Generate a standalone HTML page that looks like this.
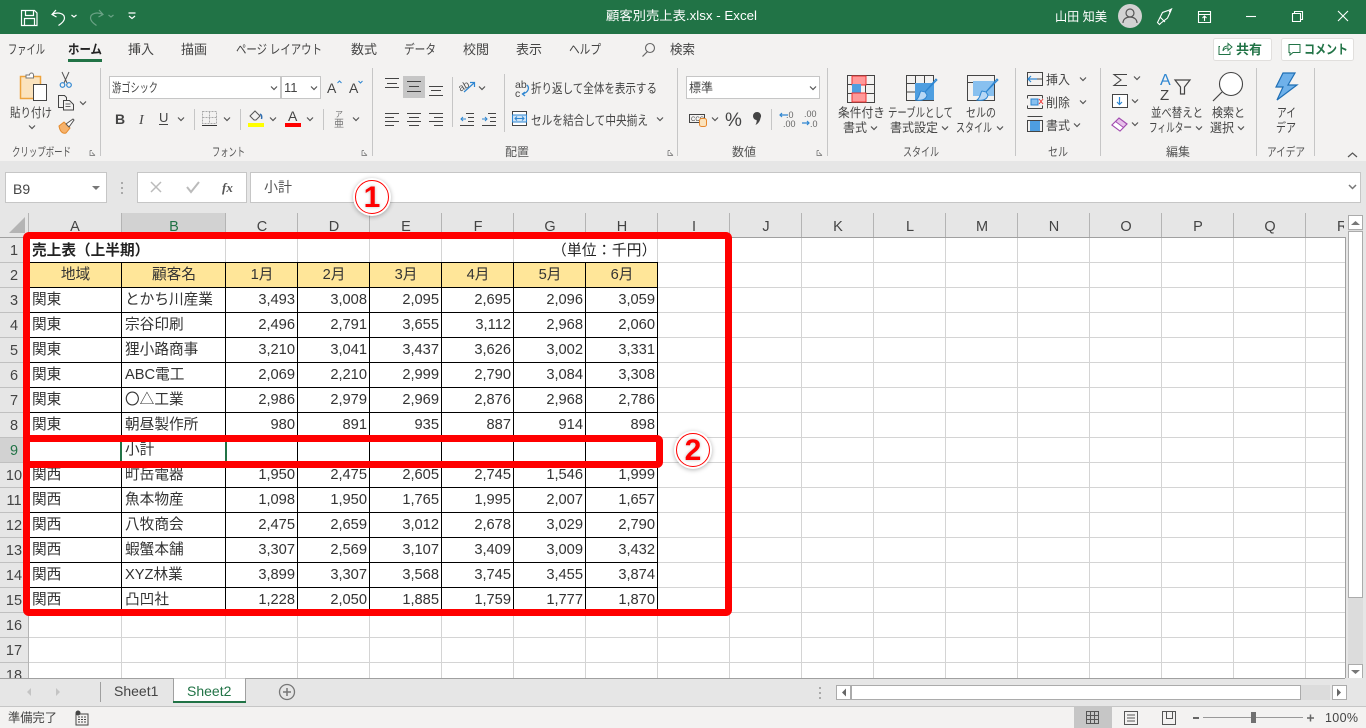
<!DOCTYPE html>
<html lang="ja"><head><meta charset="utf-8"><title>顧客別売上表.xlsx - Excel</title>
<style>
html,body{margin:0;padding:0;width:1366px;height:728px;overflow:hidden;background:#e6e6e6}
body{position:relative;font-family:"Liberation Sans","Noto Sans CJK JP",sans-serif}
svg{position:absolute;left:0;top:0}
svg text{font-family:"Liberation Sans","Noto Sans CJK JP",sans-serif;fill:#444;font-size:12px}
svg .l{font-size:12px;fill:#555}
svg .b{font-size:12.5px;fill:#444}
svg .m{font-size:13px;fill:#444}
svg .w{fill:#fff;font-size:12.5px}
svg .h{font-size:14.5px;fill:#444;text-anchor:middle}
table{position:absolute;left:28px;top:262px;border-collapse:separate;border-spacing:0;table-layout:fixed;width:630px;border-top:1px solid #000;border-left:1px solid #000;font-size:14.67px;color:#333;z-index:2}
td{box-sizing:border-box;height:25px;padding:0 2px 0 3px;border-right:1px solid #000;border-bottom:1px solid #000;background:#fff;text-align:right;white-space:nowrap;overflow:hidden;line-height:24px}
td:nth-child(1),td:nth-child(2){text-align:left}
tr.hd td{background:#ffe699;text-align:center}
.abs{position:absolute;z-index:2;font-size:14.67px;color:#222;white-space:nowrap;line-height:22px}
.box{position:absolute;box-sizing:border-box;border:7px solid #f00;border-radius:6px;z-index:4}
.c{position:absolute;width:38px;height:38px;border-radius:50%;background:#fff;box-shadow:0 1px 5px rgba(0,0,0,.3);z-index:5}
.c span{position:absolute;left:2px;top:2px;width:32px;height:32px;border:1px solid #f00;border-radius:50%;color:#f00;font-weight:bold;font-size:30px;line-height:33px;text-align:center;text-shadow:0 0 3px rgba(0,0,0,.25)}
.sel{position:absolute;background:#217346;z-index:3}
</style></head><body>

<svg width="1366" height="728" viewBox="0 0 1366 728" style="z-index:1">
<defs>
<path id="cv" d="M-3-1.5 0 1.5 3-1.5" fill="none" stroke="#555" stroke-width="1.2"/>
<path id="ln" d="M-2.5-2.5v5h5M-.5-.5l3 3M-2.5-2.5h2" fill="none" stroke="#888" stroke-width=".9"/>
</defs>
<!-- backgrounds -->
<rect width="1366" height="34" fill="#217346"/>
<rect y="34" width="1366" height="127" fill="#f3f2f1"/>
<rect y="161" width="1366" height="52" fill="#e6e6e6"/>

<!-- title bar -->
<g fill="none" stroke="#fff" stroke-width="1.2">
<path d="M21.5 10.5h13l2.500 2.500v12.500h-15.500z"/><path d="M25.500 10.500v5h8v-5M24.500 25.500v-7h10v7"/>
<path d="M56 10l-4 4.500 4.500 2.500M52 14.500c6-3 12.500-1 12.500 3.500 0 3-3 5.500-6 7.500"/>
<path d="M71.500 15l2.500 2 2.500-2"/>
<path d="M128.500 13h7M129 16l3 2.500 3-2.500"/>
</g>
<g fill="none" stroke="#6aa285" stroke-width="1.2">
<path d="M99 10l4 4.500-4.500 2.500M103 14.500c-6-3-12.500-1-12.500 3.500 0 3 3 5.500 6 7.500"/>
<path d="M108.500 15l2.500 2 2.500-2"/>
</g>
<text class="w" x="606" y="20" textLength="151" lengthAdjust="spacingAndGlyphs">顧客別売上表.xlsx  -  Excel</text>
<text class="w" x="1055" y="21" textLength="52" lengthAdjust="spacingAndGlyphs">山田 知美</text>
<circle cx="1130" cy="16" r="12" fill="#d2d2d2"/>
<circle cx="1130" cy="13" r="4" fill="none" stroke="#555" stroke-width="1.200"/>
<path d="M1123 23c0-8 14-8 14 0" fill="none" stroke="#555" stroke-width="1.200"/>
<g fill="none" stroke="#fff" stroke-width="1.100">
<path d="M1161 23l-1.500 1.500-2-2 5-10 7-2.500 2-1-1 2.500-3 6.500zM1160 17l5 5M1169 12l2-2"/>
<path d="M1198.500 11.500h12v11h-12zM1198.500 14.500h12M1204.500 21v-5M1202.500 18l2-2 2 2"/>
<path d="M1246 16.500h10"/>
<path d="M1292.500 13.500h8v8h-8zM1294.500 13.500v-2h8v8h-2"/>
<path d="M1338 11l10 10M1348 11l-10 10"/>
</g>

<!-- tabs -->
<text class="m" x="8" y="54" textLength="37" lengthAdjust="spacingAndGlyphs">ファイル</text>
<text class="m" x="68" y="54" textLength="34" lengthAdjust="spacingAndGlyphs" style="font-weight:bold;fill:#222">ホーム</text>
<rect x="68" y="59" width="34" height="3" fill="#217346"/>
<text class="m" x="128" y="54" textLength="26" lengthAdjust="spacingAndGlyphs">挿入</text>
<text class="m" x="181" y="54" textLength="26" lengthAdjust="spacingAndGlyphs">描画</text>
<text class="m" x="236" y="54" textLength="86" lengthAdjust="spacingAndGlyphs">ページ レイアウト</text>
<text class="m" x="351" y="54" textLength="26" lengthAdjust="spacingAndGlyphs">数式</text>
<text class="m" x="404" y="54" textLength="32" lengthAdjust="spacingAndGlyphs">データ</text>
<text class="m" x="463" y="54" textLength="26" lengthAdjust="spacingAndGlyphs">校閲</text>
<text class="m" x="516" y="54" textLength="26" lengthAdjust="spacingAndGlyphs">表示</text>
<text class="m" x="569" y="54" textLength="32" lengthAdjust="spacingAndGlyphs">ヘルプ</text>
<circle cx="650" cy="48" r="4.500" fill="none" stroke="#666" stroke-width="1.100"/><path d="M647 52l-4.500 4.500" stroke="#666" stroke-width="1.200"/>
<text class="m" x="670" y="54" textLength="25" lengthAdjust="spacingAndGlyphs">検索</text>

<rect x="1213.500" y="38.500" width="58" height="22" rx="2" fill="#fff" stroke="#e1dfdd"/>
<path d="M1220 46.500h-1v8h11v-3M1223 51c0-4 2-5 5-5v-2.500l4 3.500-4 3.500v-2.500c-2 0-4 .500-5 3" fill="none" stroke="#217346"/>
<text x="1236" y="54" textLength="26" style="font-weight:bold;fill:#217346;font-size:13px">共有</text>
<rect x="1281.500" y="38.500" width="72" height="22" rx="2" fill="#fff" stroke="#e1dfdd"/>
<path d="M1289 44.500h11v8h-7l-3 2.500v-2.500h-1z" fill="none" stroke="#217346"/>
<text x="1304" y="54" textLength="44" lengthAdjust="spacingAndGlyphs" style="font-weight:bold;fill:#217346;font-size:13px">コメント</text>

<!-- separators -->
<g fill="#c6c6c6">
<rect x="100" y="68" width="1" height="88"/><rect x="372" y="68" width="1" height="88"/>
<rect x="677" y="68" width="1" height="88"/><rect x="827" y="68" width="1" height="88"/>
<rect x="1015" y="68" width="1" height="88"/><rect x="1100" y="68" width="1" height="88"/>
<rect x="1256" y="68" width="1" height="88"/><rect x="1314" y="68" width="1" height="88"/>
<rect x="504" y="74" width="1" height="58"/><rect x="452" y="77" width="1" height="50"/>
<rect x="194" y="109" width="1" height="21"/><rect x="240" y="109" width="1" height="21"/><rect x="323" y="109" width="1" height="21"/>
<rect x="771" y="109" width="1" height="21"/>
</g>

<!-- clipboard -->
<rect x="20.500" y="76.500" width="20" height="22" fill="#fbe3bd" stroke="#eda33c" stroke-width="1.500"/>
<path d="M26 78v-3h3.500a2 2 0 0 1 4 0h0v3z" fill="#fff" stroke="#777"/>
<rect x="33.500" y="84.500" width="13" height="16" fill="#fff" stroke="#444"/>
<text x="10" y="117" class="b" textLength="42" lengthAdjust="spacingAndGlyphs">貼り付け</text>
<use href="#cv" x="32" y="127"/>
<path d="M62 72l5 11M69 72l-5 11" stroke="#555" fill="none"/><circle cx="62.500" cy="85" r="2.300" fill="none" stroke="#2e86d1" stroke-width="1.200"/><circle cx="69" cy="85" r="2.300" fill="none" stroke="#2e86d1" stroke-width="1.200"/>
<path d="M58.500 95.500h6l2 2v10h-8z" fill="none" stroke="#444"/><path d="M63.500 100.500h6l4 4v5.500h-10z" fill="#f3f2f1" stroke="#444"/><path d="M65.500 104h5M65.500 106.500h5" stroke="#666"/>
<use href="#cv" x="83" y="103"/>
<path d="M59 126l5-4 6 6-4 5c-3 1-6-1-7-7z" fill="#f6b26b" stroke="#e58a2b"/><path d="M66 124l7-5 1 1-5 7z" fill="#fff" stroke="#555"/>
<text x="12" y="156" class="l" textLength="59" lengthAdjust="spacingAndGlyphs">クリップボード</text>
<use href="#ln" x="92.500" y="153"/>

<!-- font group -->
<rect x="109.500" y="76.500" width="171" height="22" fill="#fff" stroke="#c6c6c6"/>
<rect x="281.500" y="76.500" width="39" height="22" fill="#fff" stroke="#c6c6c6"/>
<text x="112" y="92" textLength="46" lengthAdjust="spacingAndGlyphs" style="font-size:12.500px">游ゴシック</text>
<use href="#cv" x="274" y="88"/>
<text x="284" y="92" style="font-size:13px">11</text>
<use href="#cv" x="314" y="88"/>
<text x="327" y="93" style="font-size:14px">A</text><path d="M337.500 83l2-2 2 2" fill="none" stroke="#2e86d1"/>
<text x="349" y="93" style="font-size:14px">A</text><path d="M358.500 81l2 2 2-2" fill="none" stroke="#2e86d1"/>
<text x="115" y="124" style="font-weight:bold;font-size:14px">B</text>
<text x="139" y="124" style="font-style:italic;font-size:14px;font-family:'Liberation Serif',serif">I</text>
<text x="159" y="122" style="font-size:13px">U</text><rect x="159" y="124" width="9" height="1" fill="#444"/>
<use href="#cv" x="181" y="119"/>
<path d="M202.500 111.500h14v12h-14zM209.500 111.500v12M202.500 117.500h14" fill="none" stroke="#aaa" stroke-dasharray="2 1"/><rect x="202" y="125" width="15" height="1" fill="#333"/>
<use href="#cv" x="227" y="119"/>
<path d="M250 116l5-5 5 5-4 4h-2z" fill="none" stroke="#555"/><path d="M260 114c2 1 2 3 1.500 5" fill="none" stroke="#2e6db0" stroke-width="1.500"/><rect x="248" y="123" width="16" height="4" fill="#ff0"/>
<use href="#cv" x="273" y="119"/>
<text x="288" y="121" style="font-size:14px">A</text><rect x="285" y="123" width="16" height="4" fill="#f00"/>
<use href="#cv" x="310" y="119"/>
<text x="335" y="117" style="font-size:8px;fill:#777">ア</text><text x="334" y="127" style="font-size:10px;fill:#777">亜</text>
<use href="#cv" x="356" y="119"/>
<text x="212" y="156" class="l" textLength="33" lengthAdjust="spacingAndGlyphs">フォント</text>
<use href="#ln" x="364.500" y="153"/>

<!-- alignment -->
<rect x="403" y="76" width="22" height="22" fill="#c6c6c6"/>
<path d="M385 78.500h14M387 83.500h10M385 87.500h14M407 81.500h14M409 86.500h10M407 91.500h14M429 86.500h14M431 90.500h10M429 95.500h14" stroke="#444" fill="none"/>
<path d="M385 113.500h14M385 117.500h9M385 121.500h14M385 125.500h9M407 113.500h14M409 117.500h10M407 121.500h14M409 125.500h10M429 113.500h14M434 117.500h9M429 121.500h14M434 125.500h9" stroke="#444" fill="none"/>
<text x="459" y="90" style="font-size:10px;fill:#555" transform="rotate(-30 463 88)">ab</text><path d="M464 92l10-9M470 82.500h4.500v4.500" fill="none" stroke="#2e86d1" stroke-width="1.200"/>
<use href="#cv" x="482" y="88"/>
<path d="M466 113.500h8M468 117.500h6M468 121.500h6M460 125.500h14M488 113.500h8M490 117.500h6M490 121.500h6M482 125.500h14" stroke="#444" fill="none"/>
<path d="M466 119h-5M463 117l-2 2 2 2M482 119h5M485 117l2 2-2 2" stroke="#2e86d1" fill="none"/>
<text x="515" y="88" style="font-size:10.500px">ab</text><text x="515" y="97" style="font-size:10.500px">c</text><path d="M527 85c3 3 1 8-5 9M525 92l-2.500 2 2.500 2" fill="none" stroke="#2e86d1" stroke-width="1.300"/>
<text x="531" y="93" textLength="126" lengthAdjust="spacingAndGlyphs" style="font-size:13px">折り返して全体を表示する</text>
<rect x="512.500" y="111.500" width="14" height="14" fill="#fff" stroke="#444"/><rect x="512.500" y="115" width="14" height="7" fill="#cfe4f7" stroke="#2e86d1"/><path d="M515 118.500h9M517 116.500l-2 2 2 2M522 116.500l2 2-2 2" fill="none" stroke="#2e86d1"/>
<text x="531" y="125" textLength="117" lengthAdjust="spacingAndGlyphs" style="font-size:13px">セルを結合して中央揃え</text>
<use href="#cv" x="660" y="119"/>
<text x="505" y="156" class="l" textLength="24" lengthAdjust="spacingAndGlyphs">配置</text>
<use href="#ln" x="670.500" y="153"/>

<!-- number -->
<rect x="686.500" y="76.500" width="133" height="22" fill="#fff" stroke="#c6c6c6"/>
<text x="689" y="92" textLength="24" lengthAdjust="spacingAndGlyphs" style="font-size:12.500px">標準</text>
<use href="#cv" x="813" y="88"/>
<rect x="689.500" y="114.500" width="15" height="8" fill="none" stroke="#444"/><text x="691" y="121" style="font-size:6px">CCC</text>
<rect x="699.500" y="118.500" width="7" height="8" rx="2" fill="#fbe3bd" stroke="#e8882c"/>
<use href="#cv" x="715" y="119"/>
<text x="725" y="126" style="font-size:19px">%</text>
<path d="M757 112a4 4 0 0 1 3.500 6c-.5 3-2 5.500-5 7 1-2 1.500-4 1-5-2 0-3.500-2-3.500-4a4 4 0 0 1 4-4z" fill="#444"/>
<text x="786" y="118" style="font-size:9px;fill:#666">.0</text><text x="783" y="127" style="font-size:9px;fill:#666">.00</text>
<path d="M788 115h-8M782 113l-2 2 2 2" fill="none" stroke="#2e86d1" stroke-width="1.200"/>
<text x="804" y="117" style="font-size:9px;fill:#666">.00</text><text x="810" y="127" style="font-size:9px;fill:#666">.0</text>
<path d="M802 123h7M807 121l2 2-2 2" fill="none" stroke="#2e86d1" stroke-width="1.200"/>
<text x="732" y="156" class="l" textLength="24" lengthAdjust="spacingAndGlyphs">数値</text>
<use href="#ln" x="819.500" y="153"/>

<!-- styles -->
<path d="M847.500 75.500h27v27h-27zM847.500 84.500h27M847.500 93.500h27M856.500 75.500v27M865.500 75.500v27" fill="none" stroke="#444"/>
<rect x="852" y="76" width="14" height="9" fill="#f99" stroke="#e33"/><rect x="852" y="84" width="9" height="9" fill="#4e9ee0"/><rect x="852" y="93" width="14" height="9" fill="#f99" stroke="#e33"/>
<text x="838" y="117" textLength="47" lengthAdjust="spacingAndGlyphs" class="b">条件付き</text>
<text x="843" y="132" textLength="24" lengthAdjust="spacingAndGlyphs" class="b">書式</text><use href="#cv" x="874" y="128"/>
<path d="M906.500 75.500h27v25h-27zM906.500 83.500h27M906.500 92h27M915.500 75.500v25M924.500 75.500v25" fill="none" stroke="#444"/>
<rect x="915" y="83" width="19" height="17" fill="#4e9ee0"/>
<path d="M936 79l-11 13-4-1c-2 2-1 6-5 9 5 1 10 0 11-5l-2-3 12-12z" fill="#b8d8f5" stroke="#2e86d1"/>
<text x="888" y="117" textLength="65" lengthAdjust="spacingAndGlyphs" class="b">テーブルとして</text>
<text x="890" y="132" textLength="48" lengthAdjust="spacingAndGlyphs" class="b">書式設定</text><use href="#cv" x="945" y="128"/>
<path d="M967.500 75.500h27v25h-27zM967.500 82.500h27" fill="none" stroke="#444"/>
<rect x="973" y="81" width="21" height="15" fill="#88c0ef"/>
<path d="M997 79l-11 13-4-1c-2 2-1 6-5 9 5 1 10 0 11-5l-2-3 12-12z" fill="#b8d8f5" stroke="#2e86d1"/>
<text x="966" y="117" textLength="30" lengthAdjust="spacingAndGlyphs" class="b">セルの</text>
<text x="956" y="132" textLength="36" lengthAdjust="spacingAndGlyphs" class="b">スタイル</text><use href="#cv" x="1000" y="128"/>
<text x="903" y="156" class="l" textLength="36" lengthAdjust="spacingAndGlyphs">スタイル</text>

<!-- cells -->
<path d="M1027.500 72.500h15v13h-15zM1027.500 79h15M1035 72.500v13" fill="none" stroke="#444"/><rect x="1028" y="73" width="8" height="12" fill="#f3f2f1"/><path d="M1037 79h-9M1031 76l-3 3 3 3" fill="none" stroke="#2e86d1" stroke-width="1.200"/>
<text x="1046" y="84" textLength="24" lengthAdjust="spacingAndGlyphs" style="font-size:12.500px">挿入</text><use href="#cv" x="1083" y="79"/>
<path d="M1027.500 95.500h15M1027.500 108.500h15M1027.500 95.500v3M1042.500 95.500v3M1027.500 105.500v3M1042.500 105.500v3" fill="none" stroke="#444"/><rect x="1031" y="99" width="7" height="6" fill="#88c0ef" stroke="#2e86d1"/><path d="M1039 99l4 5M1043 99l-4 5" stroke="#e33" fill="none"/>
<text x="1046" y="107" textLength="24" lengthAdjust="spacingAndGlyphs" style="font-size:12.500px">削除</text><use href="#cv" x="1083" y="102"/>
<path d="M1027.500 120.500h15v11h-15zM1032.500 120.500v11M1037.500 120.500v11M1027.500 116.500h15" fill="none" stroke="#444"/><rect x="1030" y="121" width="10" height="10" fill="#4e9ee0"/>
<text x="1046" y="130" textLength="24" lengthAdjust="spacingAndGlyphs" style="font-size:12.500px">書式</text><use href="#cv" x="1077" y="125"/>
<text x="1048" y="156" class="l" textLength="20" lengthAdjust="spacingAndGlyphs">セル</text>

<!-- edit -->
<path d="M1127 74.500h-13l7 5.500-7 5.500h13" fill="none" stroke="#444" stroke-width="1.100"/><use href="#cv" x="1137" y="78"/>
<rect x="1112.500" y="94.500" width="15" height="13" fill="#fff" stroke="#444"/><path d="M1119.500 97v7M1117 102l2.500 2.500 2.500-2.500" fill="none" stroke="#2e86d1" stroke-width="1.200"/><use href="#cv" x="1135" y="101"/>
<path d="M1112 125l7-7 8 6-7 7z" fill="#e7c1ea" stroke="#a24bb0" stroke-width="1.200"/><path d="M1112 125l3.500-3.500 8 6-3.500 3.500z" fill="#fff" stroke="#a24bb0"/><use href="#cv" x="1135" y="124"/>
<text x="1160" y="85" style="font-size:16px;fill:#2e86d1">A</text><text x="1160" y="100" style="font-size:15px">Z</text>
<path d="M1175 80h15l-5.500 7v7h-4v-7z" fill="none" stroke="#444" stroke-width="1.200"/>
<text x="1151" y="117" textLength="52" lengthAdjust="spacingAndGlyphs" class="b">並べ替えと</text>
<text x="1149" y="132" textLength="43" lengthAdjust="spacingAndGlyphs" class="b">フィルター</text><use href="#cv" x="1199" y="128"/>
<circle cx="1231" cy="84" r="11.500" fill="#fff" stroke="#444" stroke-width="1.100"/><path d="M1222 92l-9 9" stroke="#444" stroke-width="1.200"/>
<text x="1212" y="117" textLength="33" lengthAdjust="spacingAndGlyphs" class="b">検索と</text>
<text x="1210" y="132" textLength="24" lengthAdjust="spacingAndGlyphs" class="b">選択</text><use href="#cv" x="1241" y="128"/>
<text x="1166" y="156" class="l" textLength="24" lengthAdjust="spacingAndGlyphs">編集</text>

<!-- ideas -->
<path d="M1283 73h12l-7 12h9l-20 15 6-13h-7z" fill="#6fb1ea" stroke="#1f6fb5" stroke-width="1.200"/>
<text x="1277" y="117" textLength="19" lengthAdjust="spacingAndGlyphs" class="b">アイ</text>
<text x="1276" y="132" textLength="20" lengthAdjust="spacingAndGlyphs" class="b">デア</text>
<text x="1267" y="156" class="l" textLength="38" lengthAdjust="spacingAndGlyphs">アイデア</text>
<path d="M1348 157l4.500-4 4.500 4" fill="none" stroke="#555" stroke-width="1.200"/>

<!-- formula bar -->
<rect x="5.500" y="172.500" width="101" height="30" fill="#fff" stroke="#c6c6c6"/>
<text x="13" y="194" style="font-size:14px">B9</text>
<path d="M92 186h8l-4 4z" fill="#777"/>
<g fill="#aaa"><rect x="121" y="182" width="2" height="2"/><rect x="121" y="187" width="2" height="2"/><rect x="121" y="192" width="2" height="2"/></g>
<rect x="137.500" y="172.500" width="109" height="30" fill="#fff" stroke="#c6c6c6"/>
<path d="M151 182l10 10M161 182l-10 10" stroke="#bbb" stroke-width="1.500" fill="none"/>
<path d="M187 187l4 5 8-10" stroke="#bbb" stroke-width="2" fill="none"/>
<text x="222" y="192" style="font-size:13px;font-style:italic;font-weight:bold;font-family:'Liberation Serif',serif;fill:#555">fx</text>
<rect x="250.500" y="172.500" width="1110" height="30" fill="#fff" stroke="#c6c6c6"/>
<text x="264" y="192" style="font-size:14px;fill:#555">小計</text>
<path d="M1349 185l3.500 3.500 3.500-3.500" fill="none" stroke="#777" stroke-width="1.500"/>

<!-- grid -->
<rect x="29" y="238" width="1316" height="440" fill="#fff"/>
<path fill="none" stroke="#d4d4d4" d="M121.500 238v440M225.500 238v440M297.500 238v440M369.500 238v440M441.500 238v440M513.500 238v440M585.500 238v440M657.500 238v440M729.500 238v440M801.500 238v440M873.500 238v440M945.500 238v440M1017.500 238v440M1089.500 238v440M1161.500 238v440M1233.500 238v440M1305.500 238v440
M29 262.500h1316M29 287.500h1316M29 312.500h1316M29 337.500h1316M29 362.500h1316M29 387.500h1316M29 412.500h1316M29 437.500h1316M29 462.500h1316M29 487.500h1316M29 512.500h1316M29 537.500h1316M29 562.500h1316M29 587.500h1316M29 612.500h1316M29 637.500h1316M29 662.500h1316"/>
<rect x="29" y="238" width="196" height="24" fill="#fff"/>
<rect x="514" y="238" width="143" height="24" fill="#fff"/>

<!-- column heads -->
<rect x="122" y="213" width="104" height="24" fill="#d2d2d2"/>
<path fill="none" stroke="#b4b4b4" d="M28.500 213v465M121.500 213v24M225.500 213v24M297.500 213v24M369.500 213v24M441.500 213v24M513.500 213v24M585.500 213v24M657.500 213v24M729.500 213v24M801.500 213v24M873.500 213v24M945.500 213v24M1017.500 213v24M1089.500 213v24M1161.500 213v24M1233.500 213v24M1305.500 213v24"/>
<path d="M0 237.500h1345M1345.500 213v465" stroke="#a0a0a0" fill="none"/>
<path d="M25 217v16H9z" fill="#b4b4b4"/>
<text class="h" x="75" y="231">A</text><text class="h" x="174" y="231" style="fill:#217346">B</text><text class="h" x="262" y="231">C</text><text class="h" x="334" y="231">D</text><text class="h" x="406" y="231">E</text><text class="h" x="478" y="231">F</text><text class="h" x="550" y="231">G</text><text class="h" x="622" y="231">H</text><text class="h" x="694" y="231">I</text><text class="h" x="766" y="231">J</text><text class="h" x="838" y="231">K</text><text class="h" x="910" y="231">L</text><text class="h" x="982" y="231">M</text><text class="h" x="1054" y="231">N</text><text class="h" x="1126" y="231">O</text><text class="h" x="1198" y="231">P</text><text class="h" x="1270" y="231">Q</text>
<text x="1337" y="231" style="font-size:14.500px" clip-path="url(#rc)">R</text>
<clipPath id="rc"><rect x="1306" y="213" width="38" height="24"/></clipPath>
<rect x="1345" y="213" width="21" height="24" fill="#e6e6e6"/>

<!-- row heads -->
<rect x="0" y="438" width="28" height="24" fill="#d2d2d2"/>
<path fill="none" stroke="#c0c0c0" d="M0 262.500h28M0 287.500h28M0 312.500h28M0 337.500h28M0 362.500h28M0 387.500h28M0 412.500h28M0 437.500h28M0 462.500h28M0 487.500h28M0 512.500h28M0 537.500h28M0 562.500h28M0 587.500h28M0 612.500h28M0 637.500h28M0 662.500h28"/>
<text class="h" x="14" y="255">1</text><text class="h" x="14" y="280">2</text><text class="h" x="14" y="305">3</text><text class="h" x="14" y="330">4</text><text class="h" x="14" y="355">5</text><text class="h" x="14" y="380">6</text><text class="h" x="14" y="405">7</text><text class="h" x="14" y="430">8</text><text class="h" x="14" y="455" style="fill:#217346">9</text><text class="h" x="14" y="480">10</text><text class="h" x="14" y="505">11</text><text class="h" x="14" y="530">12</text><text class="h" x="14" y="555">13</text><text class="h" x="14" y="580">14</text><text class="h" x="14" y="605">15</text><text class="h" x="14" y="630">16</text><text class="h" x="14" y="655">17</text><text class="h" x="14" y="680">18</text>

<!-- v scrollbar -->
<rect x="1346" y="213" width="20" height="465" fill="#e6e6e6"/>
<rect x="1348" y="230" width="15" height="434" fill="#dcdcdc"/>
<rect x="1348.500" y="215.500" width="14" height="14" fill="#fff" stroke="#ababab"/><path d="M1351 225l4.500-4 4.500 4z" fill="#777"/>
<rect x="1348.500" y="231.500" width="14" height="366" fill="#fff" stroke="#ababab"/>
<rect x="1348.500" y="664.500" width="14" height="14" fill="#fff" stroke="#ababab"/><path d="M1351 670l4.500 4 4.500-4z" fill="#777"/>

<!-- tab bar -->
<rect x="0" y="678" width="1366" height="28" fill="#e6e6e6"/>
<path d="M0 678.500h1345" stroke="#a0a0a0"/>
<path d="M0 706.500h1366" stroke="#c6c6c6"/>
<path d="M31 688v8l-4-4zM56 688v8l4-4z" fill="#c4c4c4"/>
<rect x="100" y="682" width="1" height="20" fill="#9f9f9f"/>
<text x="114" y="696" style="font-size:14px">Sheet1</text>
<path d="M173.500 678.500v24h72v-24" fill="#fff" stroke="#a0a0a0"/>
<rect x="173" y="701" width="73" height="2" fill="#217346"/>
<text x="187" y="696" style="font-size:14px;fill:#217346">Sheet2</text>
<circle cx="287" cy="692" r="7.500" fill="none" stroke="#777" stroke-width="1.300"/><path d="M283 692h8M287 688v8" stroke="#777" stroke-width="1.500"/>
<g fill="#aaa"><rect x="819" y="687" width="2" height="2"/><rect x="819" y="692" width="2" height="2"/><rect x="819" y="697" width="2" height="2"/></g>
<rect x="836.500" y="685.500" width="14" height="14" fill="#fff" stroke="#ababab"/><path d="M846 688.500v8l-4-4z" fill="#666"/>
<rect x="1300" y="685" width="30" height="15" fill="#dcdcdc"/>
<rect x="851.500" y="685.500" width="449" height="14" fill="#fff" stroke="#ababab"/>
<rect x="1332.500" y="685.500" width="14" height="14" fill="#fff" stroke="#ababab"/><path d="M1337 688.500v8l4-4z" fill="#666"/>

<!-- status bar -->
<rect y="707" width="1366" height="21" fill="#f3f2f1"/>
<text x="8" y="722" textLength="49" lengthAdjust="spacingAndGlyphs" style="font-size:12.500px">準備完了</text>
<path d="M76 714h12v11h-12z" fill="#f3f2f1" stroke="#444"/><path d="M78 717h8M78 719.500h8M78 722h8" stroke="#444" stroke-dasharray="2 1"/><circle cx="78" cy="713" r="2.500" fill="#444"/>
<rect x="1074" y="707" width="38" height="21" fill="#c6c6c6"/>
<path d="M1086.500 711.500h12v12h-12zM1090.500 711.500v12M1094.500 711.500v12M1086.500 715.500h12M1086.500 719.500h12" fill="none" stroke="#555"/>
<path d="M1124.500 711.500h13v13h-13zM1127 715h8M1127 718h8M1127 721h8" fill="none" stroke="#555"/>
<path d="M1162.500 711.500h13v13h-13zM1166.500 711.500v7h6v-7" fill="none" stroke="#555"/>
<rect x="1193" y="717" width="6" height="2" fill="#666"/>
<rect x="1203" y="717" width="100" height="1" fill="#999"/>
<rect x="1251" y="712" width="5" height="11" fill="#707070"/>
<path d="M1307 718h7M1310.500 714.500v7" stroke="#666" stroke-width="1.500"/>
<text x="1325" y="722" textLength="33" style="font-size:12.500px">100%</text>
</svg>

<div class="abs" style="left:32px;top:240px;font-weight:bold;z-index:2">売上表（上半期）</div>
<div class="abs" style="left:552px;top:240px;z-index:2;letter-spacing:.3px">（単位：千円）</div>

<table>
<colgroup><col style="width:93px"><col style="width:104px"><col style="width:72px"><col style="width:72px"><col style="width:72px"><col style="width:72px"><col style="width:72px"><col style="width:72px"></colgroup>
<tr class="hd"><td>地域</td><td>顧客名</td><td>1月</td><td>2月</td><td>3月</td><td>4月</td><td>5月</td><td>6月</td></tr>
<tr><td>関東</td><td>とかち川産業</td><td>3,493</td><td>3,008</td><td>2,095</td><td>2,695</td><td>2,096</td><td>3,059</td></tr>
<tr><td>関東</td><td>宗谷印刷</td><td>2,496</td><td>2,791</td><td>3,655</td><td>3,112</td><td>2,968</td><td>2,060</td></tr>
<tr><td>関東</td><td>狸小路商事</td><td>3,210</td><td>3,041</td><td>3,437</td><td>3,626</td><td>3,002</td><td>3,331</td></tr>
<tr><td>関東</td><td>ABC電工</td><td>2,069</td><td>2,210</td><td>2,999</td><td>2,790</td><td>3,084</td><td>3,308</td></tr>
<tr><td>関東</td><td>〇△工業</td><td>2,986</td><td>2,979</td><td>2,969</td><td>2,876</td><td>2,968</td><td>2,786</td></tr>
<tr><td>関東</td><td>朝昼製作所</td><td>980</td><td>891</td><td>935</td><td>887</td><td>914</td><td>898</td></tr>
<tr><td></td><td>小計</td><td></td><td></td><td></td><td></td><td></td><td></td></tr>
<tr><td>関西</td><td>町岳電器</td><td>1,950</td><td>2,475</td><td>2,605</td><td>2,745</td><td>1,546</td><td>1,999</td></tr>
<tr><td>関西</td><td>魚本物産</td><td>1,098</td><td>1,950</td><td>1,765</td><td>1,995</td><td>2,007</td><td>1,657</td></tr>
<tr><td>関西</td><td>八牧商会</td><td>2,475</td><td>2,659</td><td>3,012</td><td>2,678</td><td>3,029</td><td>2,790</td></tr>
<tr><td>関西</td><td>蝦蟹本舗</td><td>3,307</td><td>2,569</td><td>3,107</td><td>3,409</td><td>3,009</td><td>3,432</td></tr>
<tr><td>関西</td><td>XYZ林業</td><td>3,899</td><td>3,307</td><td>3,568</td><td>3,745</td><td>3,455</td><td>3,874</td></tr>
<tr><td>関西</td><td>凸凹社</td><td>1,228</td><td>2,050</td><td>1,885</td><td>1,759</td><td>1,777</td><td>1,870</td></tr>
</table>

<div class="sel" style="left:120px;top:438px;width:2px;height:24px"></div>
<div class="sel" style="left:225px;top:438px;width:2px;height:24px"></div>

<div class="box" style="left:23px;top:232px;width:709px;height:384px"></div>
<div class="box" style="left:23px;top:435px;width:640px;height:33px"></div>
<div class="c" style="left:353px;top:178px"><span>1</span></div>
<div class="c" style="left:674px;top:431px"><span>2</span></div>
</body></html>
